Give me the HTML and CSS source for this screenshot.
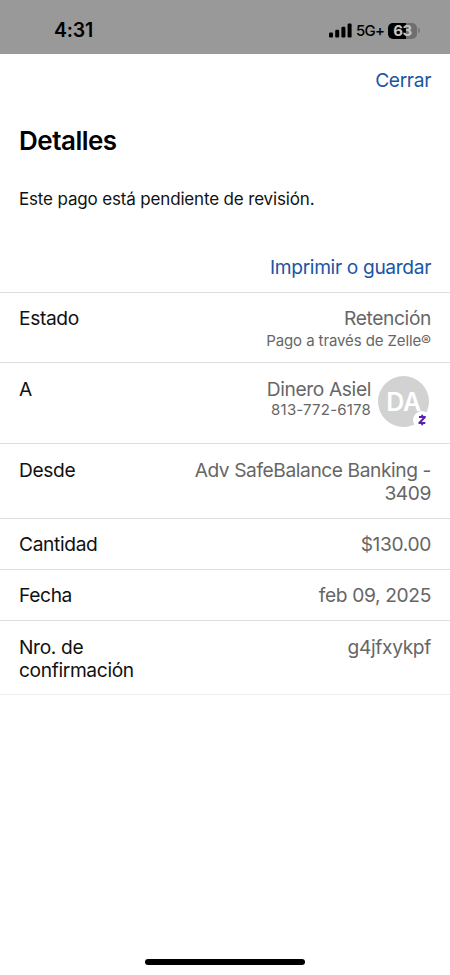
FILE: index.html
```html
<!DOCTYPE html>
<html lang="es">
<head>
<meta charset="utf-8">
<meta name="viewport" content="width=device-width, initial-scale=1">
<title>Detalles</title>
<link rel="stylesheet" href="styles.css">
</head>
<body>
<header class="status">
  <span class="time">4:31</span>
  <div class="indicators">
    <svg class="signal" width="23" height="15" viewBox="0 0 23 15"><rect x="0" y="9.5" width="4" height="5" rx="1.2"/><rect x="6.2" y="6.8" width="4" height="7.7" rx="1.2"/><rect x="12.4" y="3.8" width="4" height="10.7" rx="1.2"/><rect x="18.6" y="0.5" width="4" height="14" rx="1.2"/></svg>
    <span class="network">5G+</span>
    <div class="battery"><span>63</span></div>
    <i class="battery-cap"></i>
  </div>
</header>
<main>
  <nav class="top"><a class="link close">Cerrar</a></nav>
  <h1>Detalles</h1>
  <p class="notice">Este pago está pendiente de revisión.</p>
  <div class="actions"><a class="link print">Imprimir o guardar</a></div>
  <dl>
    <div class="row state"><dt>Estado</dt><dd>Retención<small class="via">Pago a través de Zelle®</small></dd></div>
    <div class="row payee">
      <dt>A</dt>
      <dd><div>Dinero Asiel<small class="phone">813-772-6178</small></div>
        <div class="avatar"><span>DA</span>
          <svg class="zelle" width="18" height="18" viewBox="0 0 18 18"><circle cx="9" cy="9" r="9" fill="#fff"/><path d="M6 6h6L6.3 12h6M9.2 3.8v2M9.2 12.2v2" fill="none" stroke="#5b20ae" stroke-width="1.9" stroke-linejoin="round"/></svg>
        </div>
      </dd>
    </div>
    <div class="row from"><dt>Desde</dt><dd class="account">Adv SafeBalance Banking -<br>3409</dd></div>
    <div class="row"><dt>Cantidad</dt><dd>$130.00</dd></div>
    <div class="row"><dt>Fecha</dt><dd>feb 09, 2025</dd></div>
    <div class="row confirm"><dt>Nro. de<br>confirmación</dt><dd>g4jfxykpf</dd></div>
  </dl>
</main>
<footer><div class="home"></div></footer>
</body>
</html>
```
FILE: styles.css
```css
* { box-sizing: border-box; }
body {
  margin: 0;
  width: 450px;
  height: 975px;
  display: flex;
  flex-direction: column;
  overflow: hidden;
  background: #fff;
  color: #111;
  font: 19.2px/23px Inter, "Liberation Sans", sans-serif;
  letter-spacing: -0.36px;
}
.status {
  height: 54px;
  padding: 7px 30px 0 54px;
  display: flex;
  justify-content: space-between;
  align-items: center;
  background: #999;
  color: #000;
}
.time { font-size: 19.5px; font-weight: 600; letter-spacing: -0.2px; }
.indicators { display: flex; align-items: center; }
.signal { display: block; margin-right: 4px; }
.network { width: 28px; margin-right: 4px; font-size: 15px; font-weight: 500; letter-spacing: -0.7px; }
.battery {
  width: 29px;
  height: 16px;
  border-radius: 5px;
  background: linear-gradient(90deg, #000 63%, #6f6f6f 63%);
  color: #c4c4c4;
  font-size: 15px;
  font-weight: 700;
  line-height: 16px;
  text-align: center;
}
.battery-cap { width: 2px; height: 5px; margin-left: 1px; border-radius: 0 2px 2px 0; background: #777; }
main { flex: 1; }
.top, .actions { padding: 0 19px; text-align: right; }
.top { padding-top: 15px; }
.link { color: #1a55a5; }
h1 { margin: 34px 19px 0; font-size: 26px; line-height: 30px; font-weight: 600; letter-spacing: -0.5px; color: #000; }
.notice { margin: 31px 19px 0; font-size: 17px; line-height: 24px; letter-spacing: -0.16px; }
.actions { margin-top: 45px; }
dl { margin: 13px 0 0; border-bottom: 1px solid #eee; }
.row {
  height: 51px;
  padding: 14px 19px 0;
  display: flex;
  justify-content: space-between;
  border-top: 1px solid #ddd;
}
.state { height: 70px; }
.payee { height: 81px; padding-top: 15px; }
.from { height: 75px; padding-top: 15px; }
.confirm { height: 74px; padding-top: 15px; }
dt, dd { margin: 0; }
dd { color: #666; text-align: right; }
.account { letter-spacing: -0.42px; }
small { display: block; font-size: 15px; line-height: 19px; }
.via { letter-spacing: -0.1px; padding-top: 1px; }
.phone { letter-spacing: 0.2px; margin-top: -1px; }
.payee dd { display: flex; gap: 7px; margin-right: 2px; }
.avatar {
  position: relative;
  width: 51px;
  height: 51px;
  margin-top: -2px;
  border-radius: 50%;
  background: #d2d2d2;
  color: #fff;
  font-size: 25px;
  line-height: 52px;
  font-weight: 600;
  text-align: center;
}
.zelle { position: absolute; right: -2px; bottom: -2px; }
footer { height: 16px; display: flex; justify-content: center; }
.home { width: 160px; height: 6px; border-radius: 3px; background: #000; }
```
